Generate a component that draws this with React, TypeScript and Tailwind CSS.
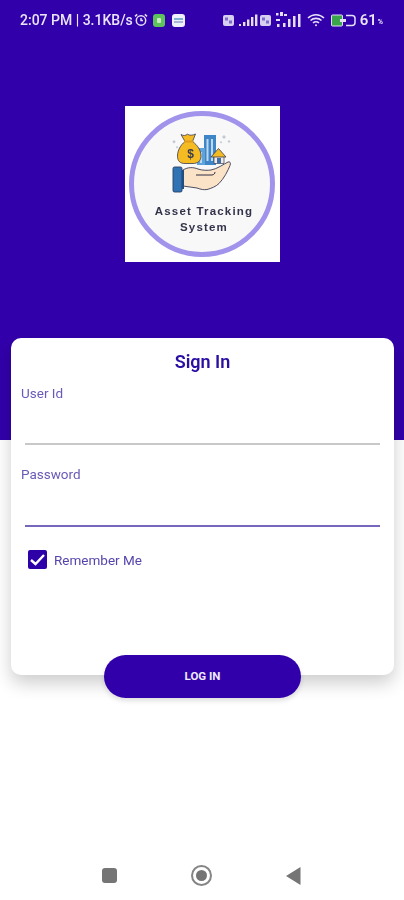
import React from "react";

const Roboto = "font-['Roboto','Liberation_Sans',sans-serif]";

function SimBox() {
  return (
    <svg width="11" height="11" viewBox="0 0 11 11">
      <rect width="11" height="11" rx="2" fill="#d6cff0" />
      <rect x="2" y="2.500" width="3" height="3" fill="#7c6bcb" />
      <rect x="6" y="5.500" width="3" height="3" fill="#7c6bcb" />
    </svg>
  );
}

function Bars() {
  return (
    <svg width="19" height="12" viewBox="0 0 19 12" fill="#e4dff6">
      <rect x="0" y="10" width="2" height="2" />
      <rect x="4" y="8" width="2.400" height="4" />
      <rect x="8" y="5.500" width="2.400" height="6.500" />
      <rect x="12" y="3" width="2.400" height="9" />
      <rect x="16" y="0.500" width="2.400" height="11.500" />
    </svg>
  );
}

function StatusBar() {
  return (
    <div className={`flex h-10 items-center justify-between pl-5 pr-[21px] text-[#e9e5f8] ${Roboto} blur-[0.5px]`}>
      <div className="flex items-center">
        <span className="text-[14px] font-medium leading-none">2:07 PM | 3.1KB/s</span>
        <svg className="ml-px" width="14" height="14" viewBox="0 0 14 14" fill="none" stroke="#e4dff6" strokeWidth="1.500">
          <circle cx="7" cy="7.500" r="4.700" />
          <path d="M7 5v2.600h2M1 3.400 3.200 1.400M13 3.400 10.800 1.400" />
        </svg>
        <div className="ml-[5px] flex h-[13px] w-[12px] items-center justify-center rounded-[3px] bg-[#5fc35b]">
          <div className="h-[5px] w-[4px] rounded-[1px] bg-[#c9eac2]" />
        </div>
        <div className="ml-[7px] flex h-[13px] w-[13px] flex-col justify-center gap-px rounded-[3px] bg-[#eef0fb] px-[2px]">
          <div className="h-[2px] bg-[#7fb0d8]" />
          <div className="h-[2px] bg-[#a9b4d6]" />
        </div>
      </div>
      <div className="flex items-center">
        <SimBox />
        <div className="ml-[5px]"><Bars /></div>
        <div className="ml-[2px]"><SimBox /></div>
        <svg className="ml-[5px]" width="25" height="16" viewBox="0 0 25 16" fill="#e4dff6">
          <rect x="0" y="1" width="2.500" height="2.500" />
          <rect x="4" y="0" width="3" height="4" />
          <rect x="8" y="2" width="3" height="2" />
          <rect x="0" y="7" width="4" height="2" />
          <rect x="1" y="12" width="2.500" height="3" />
          <rect x="7" y="11" width="2.500" height="4" />
          <rect x="12" y="7" width="2.500" height="8" />
          <rect x="17" y="4" width="2.500" height="11" />
          <rect x="22" y="2" width="2.500" height="13" />
        </svg>
        <svg className="ml-[6px]" width="18" height="14" viewBox="0 0 18 14" fill="none" stroke="#e4dff6" strokeWidth="1.600">
          <path d="M1 5c4.500-4.400 11.500-4.400 16 0M3.500 7.500c3-2.900 8-2.900 11 0M6 10c1.600-1.500 4.400-1.500 6 0" />
          <circle cx="9" cy="12.300" r="1" fill="#e4dff6" stroke="none" />
        </svg>
        <svg className="ml-[6px]" width="25" height="13" viewBox="0 0 25 13" fill="none">
          <rect x="0.500" y="1" width="11" height="11" rx="1" fill="#3aa54a" stroke="#e4dff6" />
          <rect x="9" y="5" width="6" height="3" fill="#e4dff6" />
          <path d="M15 1.500h6a3 3 0 0 1 3 3v4a3 3 0 0 1-3 3h-6" stroke="#e4dff6" strokeWidth="1.500" />
        </svg>
        <span className="ml-1 text-[15px] font-semibold leading-none">61</span>
        <span className="ml-px mt-1 text-[7px] font-bold leading-none">%</span>
      </div>
    </div>
  );
}

function LogoArt() {
  return (
    <svg width="60" height="62" viewBox="0 0 60 62">
      <g fill="#c4c9d2">
        <path d="M2 8l1.800 1.800L2 11.600.2 9.800zM5 14l1.300 1.300L5 16.600l-1.300-1.300zM52 3l2 2-2 2-2-2zM57 8l1.500 1.500L57 11l-1.500-1.500zM49 9l1.300 1.300L49 11.600l-1.300-1.300z" />
      </g>
      <rect x="32" y="3" width="12" height="30" fill="#3f86c9" />
      <rect x="25" y="16" width="8" height="17" fill="#5ea3dc" />
      <g fill="#bcd9f0">
        <rect x="34.500" y="7" width="2" height="22" />
        <rect x="39" y="7" width="2" height="22" />
        <rect x="28" y="20" width="2" height="11" />
      </g>
      <path d="M9 2.500c2.500 1.500 4.500 1.200 6.500-.3 2 1.500 5 1.300 8-.2l-3 7.500c5 3.500 8.500 9 8.500 14.500 0 5-3.500 7.500-8 7.500h-8c-5 0-7.500-2.500-7.500-7.500 0-5.500 3-11 7.500-14.500z" fill="#f4bb22" stroke="#3a3a50" strokeWidth="0.800" />
      <rect x="12" y="8.500" width="9.500" height="2" fill="#e49a1c" />
      <text x="18.500" y="26" textAnchor="middle" fontSize="12" fontWeight="700" fontFamily="Liberation Sans, sans-serif" fill="#3a3a50">$</text>
      <path d="M42 24.500v7h10v-7z" fill="#f3ecdc" stroke="#3a3a50" strokeWidth="0.700" />
      <path d="M39 25 46.500 16.500 54 25z" fill="#f4bb22" stroke="#3a3a50" strokeWidth="0.800" />
      <rect x="45" y="26" width="4" height="5.500" fill="#3f6fb0" />
      <path d="M11 38c5-3 10-3 15-1 4 1.500 10 1.500 13 1 6-1 13-6 17-8 2-.800 3 1 2 3.500-2 5-6 13-11 18-3 3-8 5-12 6-3 .500-6 0-10-1.500l-14-2z" fill="#fbe3c8" stroke="#3a3a50" strokeWidth="0.900" />
      <path d="M24 43h16c2-.300 3-1.500 3-3" fill="none" stroke="#2f2f45" strokeWidth="1" />
      <rect x="1" y="35" width="9" height="25" rx="1.500" fill="#2f73b5" stroke="#2b3f63" strokeWidth="0.900" />
      <rect x="10" y="38" width="2" height="19" fill="#1f4f83" />
    </svg>
  );
}

function Logo() {
  return (
    <div className="mx-auto mt-[66px] flex h-[156px] w-[155px] items-center justify-center bg-white">
      <div className="flex h-[146px] w-[146px] flex-col items-center rounded-full border-[5px] border-[#a193ec] bg-[#f8f8f8] pt-[16px] blur-[0.5px]">
        <LogoArt />
        <div className="mt-[9px] pl-[4px] text-center font-['Liberation_Sans',sans-serif] text-[11.500px] font-bold leading-[16px] tracking-[1.200px] text-[#33334a]">
          Asset Tracking
          <br />
          System
        </div>
      </div>
    </div>
  );
}

export default function App() {
  return (
    <div className={`relative h-[900px] w-[404px] overflow-hidden bg-white ${Roboto}`}>
      <div className="h-[440px] bg-[#3200ab]">
        <StatusBar />
        <Logo />
      </div>

      <div className="ml-[11px] mr-[10px] -mt-[102px] h-[337px] rounded-[10px] bg-white px-[10px] pt-[13px] shadow-[0_8px_18px_rgba(0,0,0,0.2)]">
        <div className="text-center text-[18px] font-semibold leading-[22px] text-[#2b0fa3] blur-[0.3px]">Sign In</div>
        <div className="mt-[12px]">
          <div className="text-[13.500px] leading-[16px] text-[#6a5ab8] blur-[0.4px]">User Id</div>
          <div className="ml-1 mr-1 mt-[42px] h-[2px] bg-[#c8c8c8]" />
        </div>
        <div className="mt-[21px]">
          <div className="text-[13.500px] leading-[16px] text-[#6a5ab8] blur-[0.4px]">Password</div>
          <div className="ml-1 mr-1 mt-[43px] h-[2px] bg-[#7667bd]" />
        </div>
        <label className="ml-[7px] mt-[23px] flex items-center gap-[7px]">
          <span className="flex h-[19px] w-[19px] items-center justify-center rounded-[2px] bg-[#2e00a8]">
            <svg width="17" height="17" viewBox="0 0 17 17" fill="none" stroke="#ffffff" strokeWidth="2.400">
              <path d="M2 9l4.500 4L15 4" />
            </svg>
          </span>
          <span className="text-[13.500px] leading-[16px] text-[#5546ad] blur-[0.4px]">Remember Me</span>
        </label>
      </div>

      <button className="relative mx-auto -mt-[20px] flex h-[43px] w-[197px] items-center justify-center rounded-full bg-[#3200ab] pl-px pt-px text-[11.500px] font-bold text-[#efeafb] shadow-[0_3px_5px_rgba(0,0,0,0.12)]">
        LOG IN
      </button>

      <div className="mt-[167px] flex items-center pl-[102px] blur-[0.5px]">
        <div className="h-[15px] w-[15px] rounded-[3px] bg-[#757575]" />
        <div className="ml-[74px] flex h-[21px] w-[21px] items-center justify-center rounded-full border-[2px] border-[#858585]">
          <div className="h-[11px] w-[11px] rounded-full bg-[#757575]" />
        </div>
        <svg className="ml-[74px]" width="15" height="18" viewBox="0 0 15 18">
          <path d="M14.500 0v18L0 9z" fill="#757575" />
        </svg>
      </div>
    </div>
  );
}
